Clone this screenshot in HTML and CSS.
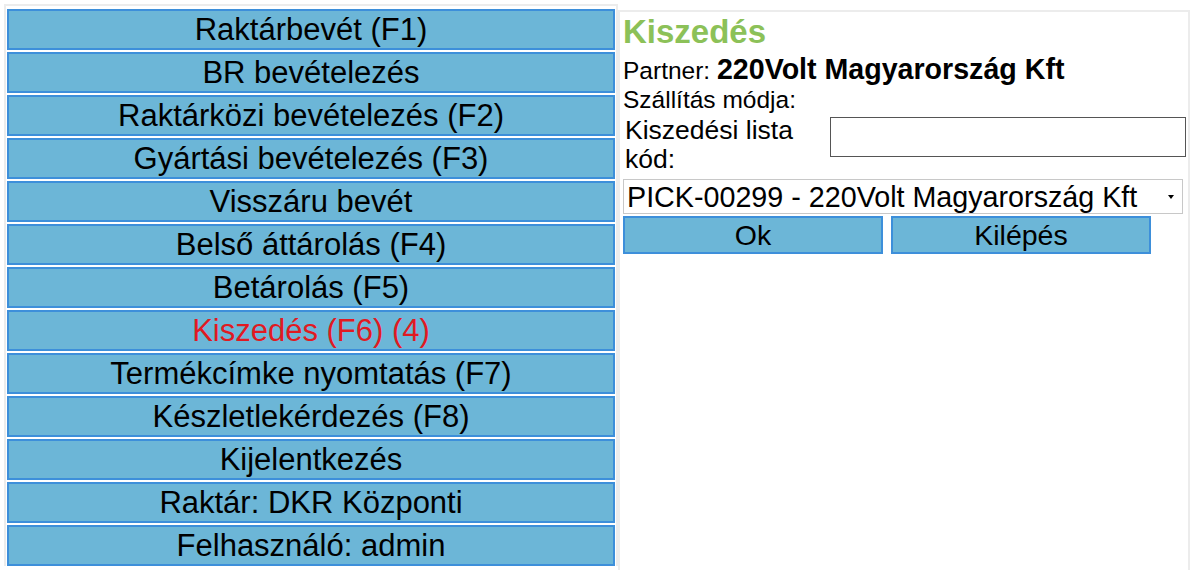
FILE: index.html
```html
<!DOCTYPE html>
<html lang="hu">
<head>
<meta charset="UTF-8" />
<title>Kiszedés</title>
<link rel="stylesheet" href="styles.css">
</head>
<body>

<div class="layout">
  <div class="menu">
    <button class="menu-btn">Raktárbevét (F1)</button>
    <button class="menu-btn">BR bevételezés</button>
    <button class="menu-btn">Raktárközi bevételezés (F2)</button>
    <button class="menu-btn">Gyártási bevételezés (F3)</button>
    <button class="menu-btn">Visszáru bevét</button>
    <button class="menu-btn">Belső áttárolás (F4)</button>
    <button class="menu-btn">Betárolás (F5)</button>
    <button class="menu-btn active">Kiszedés (F6) (4)</button>
    <button class="menu-btn">Termékcímke nyomtatás (F7)</button>
    <button class="menu-btn">Készletlekérdezés (F8)</button>
    <button class="menu-btn">Kijelentkezés</button>
    <button class="menu-btn">Raktár: DKR Központi</button>
    <button class="menu-btn">Felhasználó: admin</button>
  </div>

  <div class="panel">
    <h2>Kiszedés</h2>
    <div class="info">Partner: <b>220Volt Magyarország Kft</b></div>
    <div class="info">Szállítás módja:</div>

    <table class="form-table">
      <tr>
        <td class="label"><label for="code">Kiszedési lista kód:</label></td>
        <td class="field"><input type="text" id="code" class="code-input" /></td>
      </tr>
    </table>

    <div class="select-wrap">
      <select class="pick-select">
        <option>PICK-00299 - 220Volt Magyarország Kft</option>
      </select>
    </div>

    <div class="actions">
      <button class="act-btn">Ok</button>
      <button class="act-btn">Kilépés</button>
    </div>
  </div>
</div>

</body>
</html>
```

FILE: styles.css
```css
body {
  margin: 0;
  background: #fff;
  font-family: "Liberation Sans", Arial, sans-serif;
  color: #000;
}
.layout {
  display: flex;
  align-items: flex-start;
  padding: 4px 0 0 4px;
}
.menu {
  width: 608px;
  border: 2px solid #ececec;
  border-bottom: none;
  padding: 3px 1px 0 1px;
  display: flex;
  flex-direction: column;
  gap: 2px;
}
.menu-btn {
  display: block;
  width: 100%;
  height: 41px;
  margin: 0;
  padding: 0;
  background-color: #6cb6d7;
  border: 2px solid #3d8fda;
  font-family: "Liberation Sans", Arial, sans-serif;
  font-size: 31px;
  color: #000;
  cursor: pointer;
}
.menu-btn.active {
  color: #e01a22;
}
.panel {
  margin-top: 6px;
  width: 572px;
  height: 600px;
  border: 2px solid #ececec;
  padding: 0 0 0 3px;
  box-sizing: border-box;
}
.panel h2 {
  margin: 1px 0 2px 0;
  font-size: 33px;
  color: #8cc158;
}
.info {
  font-size: 24.5px;
}
.info b {
  font-size: 28.6px;
}
.form-table {
  border-spacing: 2px;
  margin: -1px 0 0 -1px;
}
.form-table td {
  vertical-align: top;
}
.form-table .label {
  width: 203px;
  padding: 1px;
  font-size: 26.5px;
  line-height: 29px;
}
.form-table .field {
  padding: 0;
}
.code-input {
  display: block;
  width: 356px;
  height: 40px;
  box-sizing: border-box;
  margin: 2px 0 0 0;
  border: 1px solid #555;
  font-size: 24px;
}
.select-wrap {
  position: relative;
  width: 560px;
  margin-top: 2px;
}
.select-wrap::after {
  content: "";
  position: absolute;
  right: 9px;
  top: 16px;
  border-left: 3px solid transparent;
  border-right: 3px solid transparent;
  border-top: 4px solid #000;
}
.pick-select {
  appearance: none;
  width: 100%;
  height: 35px;
  padding: 0 0 0 3px;
  border: 1px solid #c8c8c8;
  background: #fff;
  font-family: "Liberation Sans", Arial, sans-serif;
  font-size: 28.7px;
  color: #000;
}
.actions {
  display: flex;
  gap: 8px;
  margin-top: 2px;
}
.act-btn {
  width: 260px;
  height: 38px;
  padding: 0;
  background-color: #6cb6d7;
  border: 2px solid #3d8fda;
  font-family: "Liberation Sans", Arial, sans-serif;
  font-size: 28.5px;
  color: #000;
  cursor: pointer;
}
```
